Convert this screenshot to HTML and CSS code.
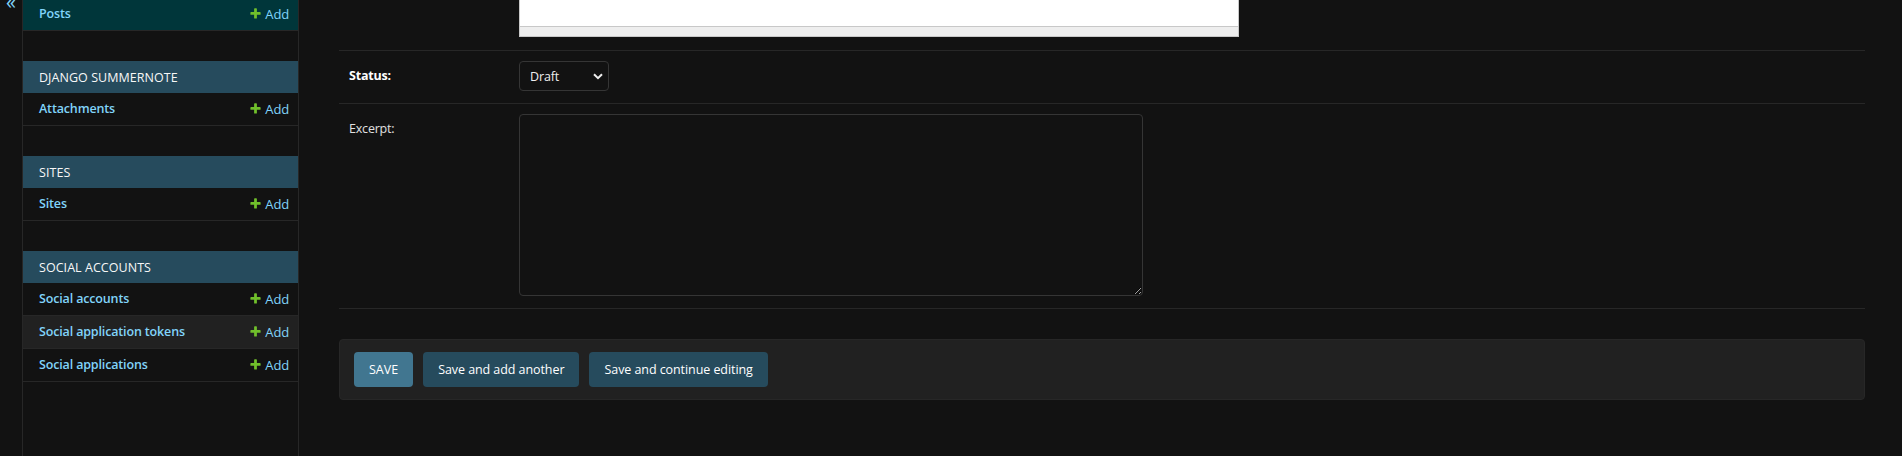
FILE: index.html
```html
<!DOCTYPE html>
<html lang="en">
<head>
<meta charset="utf-8">
<title>Add post | Django site admin</title>
<link rel="stylesheet" href="styles.css">
</head>
<body>
<div class="page">
  <div class="toggle"><span class="toggle-glyph">«</span></div>
  <nav class="sidebar">
    <div class="module first">
      <div class="row selected"><a class="model" href="#">Posts</a><a class="addlink" href="#"><svg class="plus" width="13" height="13" viewBox="0 0 1792 1792"><path fill="#70bf2b" d="M1600 796v192q0 40-28 68t-68 28h-416v416q0 40-28 68t-68 28h-192q-40 0-68-28t-28-68v-416h-416q-40 0-68-28t-28-68v-192q0-40 28-68t68-28h416v-416q0-40 28-68t68-28h192q40 0 68 28t28 68v416h416q40 0 68 28t28 68z"/></svg>Add</a></div>
    </div>
    <div class="module">
      <div class="caption">Django Summernote</div>
      <div class="row"><a class="model" href="#">Attachments</a><a class="addlink" href="#"><svg class="plus" width="13" height="13" viewBox="0 0 1792 1792"><path fill="#70bf2b" d="M1600 796v192q0 40-28 68t-68 28h-416v416q0 40-28 68t-68 28h-192q-40 0-68-28t-28-68v-416h-416q-40 0-68-28t-28-68v-192q0-40 28-68t68-28h416v-416q0-40 28-68t68-28h192q40 0 68 28t28 68v416h416q40 0 68 28t28 68z"/></svg>Add</a></div>
    </div>
    <div class="module">
      <div class="caption">Sites</div>
      <div class="row"><a class="model" href="#">Sites</a><a class="addlink" href="#"><svg class="plus" width="13" height="13" viewBox="0 0 1792 1792"><path fill="#70bf2b" d="M1600 796v192q0 40-28 68t-68 28h-416v416q0 40-28 68t-68 28h-192q-40 0-68-28t-28-68v-416h-416q-40 0-68-28t-28-68v-192q0-40 28-68t68-28h416v-416q0-40 28-68t68-28h192q40 0 68 28t28 68v416h416q40 0 68 28t28 68z"/></svg>Add</a></div>
    </div>
    <div class="module">
      <div class="caption">Social Accounts</div>
      <div class="row"><a class="model" href="#">Social accounts</a><a class="addlink" href="#"><svg class="plus" width="13" height="13" viewBox="0 0 1792 1792"><path fill="#70bf2b" d="M1600 796v192q0 40-28 68t-68 28h-416v416q0 40-28 68t-68 28h-192q-40 0-68-28t-28-68v-416h-416q-40 0-68-28t-28-68v-192q0-40 28-68t68-28h416v-416q0-40 28-68t68-28h192q40 0 68 28t28 68v416h416q40 0 68 28t28 68z"/></svg>Add</a></div>
      <div class="row hover"><a class="model" href="#">Social application tokens</a><a class="addlink" href="#"><svg class="plus" width="13" height="13" viewBox="0 0 1792 1792"><path fill="#70bf2b" d="M1600 796v192q0 40-28 68t-68 28h-416v416q0 40-28 68t-68 28h-192q-40 0-68-28t-28-68v-416h-416q-40 0-68-28t-28-68v-192q0-40 28-68t68-28h416v-416q0-40 28-68t68-28h192q40 0 68 28t28 68v416h416q40 0 68 28t28 68z"/></svg>Add</a></div>
      <div class="row"><a class="model" href="#">Social applications</a><a class="addlink" href="#"><svg class="plus" width="13" height="13" viewBox="0 0 1792 1792"><path fill="#70bf2b" d="M1600 796v192q0 40-28 68t-68 28h-416v416q0 40-28 68t-68 28h-192q-40 0-68-28t-28-68v-416h-416q-40 0-68-28t-28-68v-192q0-40 28-68t68-28h416v-416q0-40 28-68t68-28h192q40 0 68 28t28 68v416h416q40 0 68 28t28 68z"/></svg>Add</a></div>
    </div>
  </nav>
  <main class="content">
    <div class="form-row editor-row">
      <div class="label-col"></div>
      <div class="editor">
        <div class="editor-body"></div>
        <div class="editor-status"></div>
      </div>
    </div>
    <div class="form-row status-row">
      <label class="label required">Status:</label>
      <div class="select"><span>Draft</span><svg class="chev" width="10" height="7" viewBox="0 0 10 7"><path d="M1 1.2 L5 5.2 L9 1.2" fill="none" stroke="#eeeeee" stroke-width="2"/></svg></div>
    </div>
    <div class="form-row excerpt-row">
      <label class="label">Excerpt:</label>
      <textarea class="textarea"></textarea>
    </div>
    <div class="submit-row">
      <button class="btn default">SAVE</button>
      <button class="btn">Save and add another</button>
      <button class="btn">Save and continue editing</button>
    </div>
  </main>
</div>
</body>
</html>
```

FILE: styles.css
```css
html, body {
  margin: 0;
  padding: 0;
  background: #121212;
  color: #eeeeee;
  font-family: "Open Sans", "Noto Sans", "Liberation Sans", sans-serif;
}

.page {
  display: flex;
  min-height: 456px;
  height: 456px;
  overflow: hidden;
}

.toggle {
  flex: 0 0 23px;
  box-sizing: border-box;
  border-right: 1px solid #272727;
  color: #81d4fa;
  font-size: 20px;
  line-height: 20px;
  overflow: hidden;
}

.toggle-glyph {
  display: block;
  margin-top: -8px;
  padding-left: 6px;
}

.sidebar {
  flex: 0 0 276px;
  box-sizing: border-box;
  border-right: 1px solid #272727;
  font-size: 12.5px;
  letter-spacing: -0.15px;
}

.module {
  margin-bottom: 30px;
}

.module.first {
  margin-top: -2px;
}

.caption {
  background: #264b5d;
  color: #f7f7f7;
  text-transform: uppercase;
  letter-spacing: 0.05px;
  line-height: 16px;
  padding: 9px 8px 7px 16px;
  font-size: 12.5px;
}

.row {
  display: flex;
  justify-content: space-between;
  align-items: flex-start;
  line-height: 16px;
  padding: 8px 9px 8px 16px;
  border-bottom: 1px solid #272727;
}

.row.selected {
  background: #00363a;
}

.row.hover {
  background: #212121;
}

.row a {
  color: #81d4fa;
  text-decoration: none;
}

.model {
  font-weight: 600;
}

.addlink {
  display: flex;
  align-items: flex-start;
  font-size: 13px;
}

.plus {
  margin-top: 1px;
  margin-right: 3px;
  margin-left: -1px;
}

.content {
  flex: 1;
  padding: 0 37px 0 40px;
  font-size: 12.5px;
  letter-spacing: -0.2px;
}

.form-row {
  display: flex;
  align-items: flex-start;
  padding: 10px;
  border-bottom: 1px solid #272727;
}

.editor-row {
  padding-top: 0;
  padding-bottom: 13px;
}

.status-row {
  padding-bottom: 12px;
}

.excerpt-row {
  padding-bottom: 12px;
}

.label-col {
  flex: 0 0 170px;
}

.label {
  flex: 0 0 160px;
  padding: 7px 10px 0 0;
  line-height: 16px;
  color: #e0e0e0;
}

.label.required {
  font-weight: 700;
  color: #ffffff;
}

.editor {
  width: 720px;
  box-sizing: border-box;
  border: 1px solid #c8c8c8;
  border-top: 0;
  background: #ffffff;
}

.editor-body {
  height: 26px;
}

.editor-status {
  height: 9px;
  background: #eeeeee;
  border-top: 1px solid #c8c8c8;
}

.select {
  width: 90px;
  height: 30px;
  box-sizing: border-box;
  border: 1px solid #353535;
  border-radius: 4px;
  background: #121212;
  display: flex;
  align-items: center;
  justify-content: space-between;
  padding: 0 5px 0 10px;
  font-size: 12.5px;
  letter-spacing: -0.15px;
  color: #eeeeee;
}

.chev {
  display: block;
}

.textarea {
  display: block;
  width: 624px;
  height: 182px;
  box-sizing: border-box;
  margin: 0;
  background: #121212;
  border: 1px solid #353535;
  border-radius: 4px;
  color: #eeeeee;
  resize: both;
}

.submit-row {
  margin-top: 30px;
  padding: 12px 14px;
  background: #212121;
  border: 1px solid #272727;
  border-radius: 4px;
  display: flex;
  gap: 10px;
}

.btn {
  height: 35px;
  padding: 0 15px;
  border: 0;
  border-radius: 4px;
  background: #264b5d;
  color: #ffffff;
  font-family: inherit;
  font-size: 12.5px;
  letter-spacing: -0.07px;
  line-height: 15px;
}

.btn.default {
  background: #417690;
  letter-spacing: 0;
}
```
